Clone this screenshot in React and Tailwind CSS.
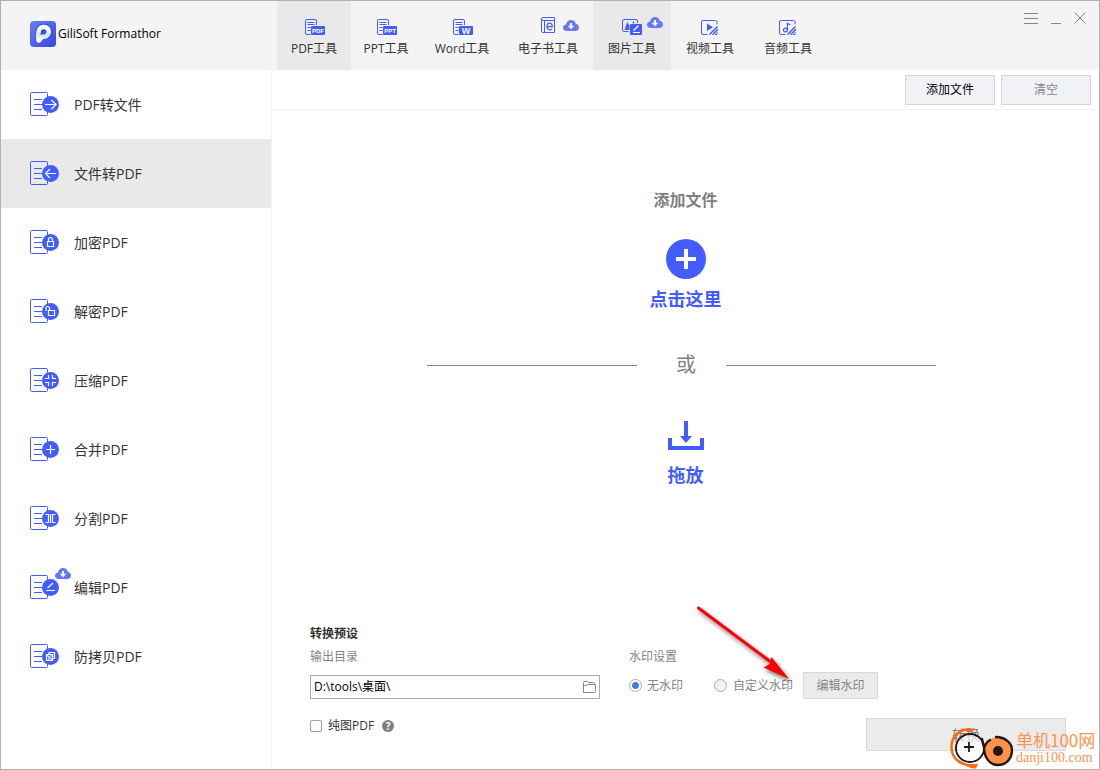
import React, { useState } from 'react';

const BLUE = '#435cff';

const tabs = [
  { id: 'pdf', label: 'PDF工具', width: 'w-[74px]', badge: 'PDF', active: true },
  { id: 'ppt', label: 'PPT工具', width: 'w-[70px]', badge: 'PPT' },
  { id: 'word', label: 'Word工具', width: 'w-[82px]', badge: 'W' },
  { id: 'ebook', label: '电子书工具', width: 'w-[90px]', cloud: 'left-[60px] top-[19px]' },
  { id: 'image', label: '图片工具', width: 'w-[78px]', cloud: 'left-[54px] top-[16px]', active: true },
  { id: 'video', label: '视频工具', width: 'w-[78px]' },
  { id: 'audio', label: '音频工具', width: 'w-[78px]' },
];

const menu = [
  { id: 'fromPdf', label: 'PDF转文件' },
  { id: 'toPdf', label: '文件转PDF' },
  { id: 'lock', label: '加密PDF' },
  { id: 'unlock', label: '解密PDF' },
  { id: 'compress', label: '压缩PDF' },
  { id: 'merge', label: '合并PDF' },
  { id: 'split', label: '分割PDF' },
  { id: 'edit', label: '编辑PDF', cloud: true },
  { id: 'protect', label: '防拷贝PDF' },
];

function Logo() {
  return (
    <svg width="26" height="26" viewBox="0 0 26 26" className="shrink-0" aria-hidden="true">
      <defs>
        <linearGradient id="logoBg" x1="0" y1="0" x2="1" y2="1">
          <stop offset="0" stopColor="#6b7df8" />
          <stop offset="1" stopColor="#3448dc" />
        </linearGradient>
        <linearGradient id="logoStem" x1="0" y1="0" x2="0" y2="1">
          <stop offset="0" stopColor="#ffffff" />
          <stop offset="0.65" stopColor="#d3e4f8" />
          <stop offset="1" stopColor="#ffffff" />
        </linearGradient>
      </defs>
      <rect width="26" height="26" rx="4" fill="url(#logoBg)" />
      <path d="M8.4 19.5C7.4 14 8 6 13.5 5.7C21 5.5 20.6 16.2 13.6 15.8" fill="none" stroke="#2c3fc4" strokeOpacity=".5" strokeWidth="6.6" strokeLinecap="round" />
      <path d="M8.4 19.4C7.4 13 8.4 6.2 13.5 6C20.6 5.8 20.4 15.7 13.6 15.6C11.5 15.5 10.4 17 9.2 19.4" fill="none" stroke="url(#logoStem)" strokeWidth="4.6" strokeLinecap="round" strokeLinejoin="round" />
      <circle cx="13.4" cy="11" r="2.5" fill="#3a50e2" />
    </svg>
  );
}

function Cloud() {
  return (
    <svg width="16" height="11" viewBox="0 0 16 11" className="block" aria-hidden="true">
      <path d="M4 11C1.7 11 0 9.7 0 7.7C0 5.8 1.4 4.6 3.1 4.4C3.4 1.8 5.5 0 8 0C10.4 0 12.4 1.6 12.9 4C14.7 4.2 16 5.6 16 7.5C16 9.6 14.4 11 12.2 11Z" fill="#6578f5" />
      <path d="M8 9.3L4.7 5.8H7V3H9V5.8H11.3Z" fill="#fff" />
    </svg>
  );
}

function TabIcon({ id, badge }) {
  if (badge) {
    return (
      <svg width="24" height="20" viewBox="0 0 24 20" aria-hidden="true">
        <path d="M8.5 18.5H5Q3.5 18.5 3.5 17V5Q3.5 3.5 5 3.5H13Q14.5 3.5 14.5 5V9" fill="none" stroke={BLUE} />
        <path d="M5.5 6.5H12.5M5.5 8.5H12.5M5.5 11.5H8.5M5.5 14.5H8.5" stroke={BLUE} />
        <rect x="9" y="10" width="14" height="9" rx="1" fill={BLUE} />
        <text
          x="16"
          y={badge === 'W' ? 18 : 17}
          textAnchor="middle"
          fill="#fff"
          fontFamily="Liberation Sans, sans-serif"
          fontWeight="700"
          fontSize={badge === 'W' ? 9 : 6}
        >
          {badge}
        </text>
      </svg>
    );
  }
  if (id === 'ebook') {
    return (
      <svg width="24" height="20" viewBox="0 0 24 20" fill="none" stroke={BLUE} aria-hidden="true">
        <path d="M18.5 4.5V1.5H7Q5.5 1.5 5.5 3V15Q5.5 16.5 7 16.5H18.5V4.5H7Q5.5 4.5 5.5 3M8.5 4.5V16.5" />
        <path d="M11 10.6H16.3C16.4 8.6 15.4 7.2 13.7 7.2C12 7.2 11 8.7 11 10.6C11 12.6 12.1 13.8 13.8 13.8C14.8 13.8 15.5 13.4 16 12.8" strokeWidth="1.2" />
      </svg>
    );
  }
  if (id === 'image') {
    return (
      <svg width="24" height="20" viewBox="0 0 24 20" aria-hidden="true">
        <path d="M8.5 15.5H4Q2.5 15.5 2.5 14V5Q2.5 3.5 4 3.5H16Q17.5 3.5 17.5 5V7" fill="none" stroke={BLUE} />
        <path d="M4.5 14L7.2 6L9.5 10V14Z" fill={BLUE} />
        <circle cx="13.5" cy="6.5" r="1" fill={BLUE} />
        <rect x="10" y="8" width="12" height="11" rx="1" fill={BLUE} />
        <path d="M13 16.5H20M13.5 14.5L18.5 9.8" stroke="#fff" strokeWidth="1.2" />
      </svg>
    );
  }
  return (
    <svg width="24" height="20" viewBox="0 0 24 20" aria-hidden="true">
      <path d="M9.5 18.5H5Q3.5 18.5 3.5 17V6Q3.5 4.5 5 4.5H17.5Q19 4.5 19 6V8.5M19 16V18.5H17" fill="none" stroke={BLUE} />
      <path d="M11.5 18.5L19.5 10.5M14.5 18.7L20 13.2" stroke={BLUE} strokeWidth="1.5" />
      {id === 'video' ? (
        <path d="M9 7.5V15L15 11.2Z" fill={BLUE} />
      ) : (
        <g fill="none" stroke={BLUE} strokeWidth="1.2">
          <circle cx="9.4" cy="14" r="1.9" />
          <path d="M11.4 14V7.5Q12.5 8.6 14.5 8.3" />
        </g>
      )}
    </svg>
  );
}

// white glyphs inside the round badge, centred on 20.5,12.5
const glyphs = {
  fromPdf: 'M15 12.5H25.5M21.5 8L26 12.5L21.5 17',
  toPdf: 'M26 12.5H15.5M20 8L15.5 12.5L20 17',
  lock: 'M17.5 11.5H23.5V16.5H17.5ZM18.5 11V10Q18.5 7.5 20.5 7.5Q22.5 7.5 22.5 10V11',
  unlock: 'M18.5 11.5H24.5V16.5H18.5ZM16 12V9.5Q16 7.5 17.7 7.5Q19.5 7.5 19.5 9.5V11',
  compress: 'M18.5 7V10.5H15M22.5 7V10.5H26M18.5 18V14.5H15M22.5 18V14.5H26',
  merge: 'M16 12.5H25M20.5 8V17',
  split: 'M20.5 8V17M15.5 8.5H18.5V16.5H15.5M25.5 8.5H22.5V16.5H25.5',
  edit: 'M16 15.5H25M17.5 13L23 8',
  protect: 'M19 10V8.5H24.5V14.5H23M16.5 10.5H22.5V16.5H16.5ZM16.5 10.5L22.5 16.5M18 14.5L19 15.5M20.5 11.5L21.5 12.5',
};

function MenuIcon({ id }) {
  return (
    <svg width="30" height="25" viewBox="0 0 30 25" fill="none" aria-hidden="true">
      <rect x=".5" y=".5" width="17" height="23" rx="1" stroke={BLUE} />
      <path d="M4 7.5H12M4 12.5H12M4 17.5H12" stroke={BLUE} />
      <circle cx="20.5" cy="12.5" r="8.5" fill={BLUE} />
      <path d={glyphs[id]} stroke="#fff" strokeWidth="1.2" />
    </svg>
  );
}

function Header() {
  return (
    <header className="flex h-[69px] shrink-0 bg-[#f4f4f4]">
      <div className="flex w-[276px] shrink-0 items-center pl-[29px] pb-[3px] gap-0.5">
        <Logo />
        <h1 className="text-xs leading-5 text-black">GiliSoft Formathor</h1>
      </div>
      <nav className="flex">
        {tabs.map((tab) => (
          <button
            key={tab.id}
            type="button"
            className={`relative flex flex-col items-center pt-[15px] gap-1 shrink-0 ${tab.width} ${tab.active ? 'bg-[#e9e9e9]' : ''}`}
          >
            <TabIcon id={tab.id} badge={tab.badge} />
            <span className="text-xs leading-[18px] whitespace-nowrap">{tab.label}</span>
            {tab.cloud && (
              <span className={`absolute ${tab.cloud}`}>
                <Cloud />
              </span>
            )}
          </button>
        ))}
      </nav>
      <div className="ml-auto flex items-start gap-3 pt-[10px] pr-[13px]">
        <button type="button" aria-label="菜单">
          <svg width="14" height="16" viewBox="0 0 14 16" className="block" stroke="#858585">
            <path d="M0 2.5H14M0 7.5H14M0 12.5H14" />
          </svg>
        </button>
        <button type="button" aria-label="最小化">
          <svg width="12" height="16" viewBox="0 0 12 16" className="block" stroke="#858585">
            <path d="M1 12.5H11" />
          </svg>
        </button>
        <button type="button" aria-label="关闭">
          <svg width="12" height="16" viewBox="0 0 12 16" className="block" stroke="#858585">
            <path d="M.5 1.5L11.5 12.5M11.5 1.5L.5 12.5" />
          </svg>
        </button>
      </div>
    </header>
  );
}

function Sidebar({ current, onSelect }) {
  return (
    <aside className="w-[271px] shrink-0 border-r border-[#f4f4f4]">
      {menu.map((item) => (
        <button
          key={item.id}
          type="button"
          onClick={() => onSelect(item.id)}
          className={`relative flex w-full items-center gap-[14px] py-[22px] pl-[29px] text-left ${current === item.id ? 'bg-[#e9e9e9]' : ''}`}
        >
          <MenuIcon id={item.id} />
          <span className="text-sm leading-5">{item.label}</span>
          {item.cloud && (
            <span className="absolute left-[54px] top-[15px]">
              <Cloud />
            </span>
          )}
        </button>
      ))}
    </aside>
  );
}

function DropArea() {
  return (
    <section className="flex flex-1 flex-col items-center pt-[78px]">
      <h2 className="text-base leading-6 font-bold text-[#7f7f7f]">添加文件</h2>
      <button type="button" className="mt-[27px] flex flex-col items-center gap-1.5 text-[#435cff]">
        <svg width="40" height="40" viewBox="0 0 40 40" aria-hidden="true">
          <circle cx="20" cy="20" r="20" fill={BLUE} />
          <path d="M10 20H30M20 10V30" stroke="#fff" strokeWidth="4" />
        </svg>
        <span className="text-lg leading-7 font-bold">点击这里</span>
      </button>
      <div className="mt-[38px] flex items-center pr-2">
        <div className="h-px w-[210px] bg-[#858585]" />
        <span className="ml-[39px] mr-[30px] text-xl leading-7 text-[#7f7f7f]">或</span>
        <div className="h-px w-[210px] bg-[#858585]" />
      </div>
      <svg width="36" height="29" viewBox="0 0 36 29" className="mt-[42px]" aria-hidden="true">
        <path d="M2 17V27H34V17" fill="none" stroke={BLUE} strokeWidth="4" />
        <path d="M16 0H20V15H24L18 22L12 15H16Z" fill={BLUE} />
      </svg>
      <p className="mt-[11px] text-lg leading-7 font-bold text-[#435cff]">拖放</p>
    </section>
  );
}

function Settings() {
  const [folder, setFolder] = useState('D:\\tools\\桌面\\');
  const [mark, setMark] = useState('none');
  const [imageOnly, setImageOnly] = useState(false);

  return (
    <section className="pl-[38px] pr-[33px] pb-[18px] text-xs">
      <h3 className="leading-6 font-bold">转换预设</h3>
      <div className="relative flex gap-[29px]">
        <div className="w-[290px]">
          <label htmlFor="folder" className="block leading-[22px] text-[#858585]">输出目录</label>
          <div className="mt-[7px] flex h-6 items-center border border-[#acacac] pl-[3px] pr-[3px]">
            <input
              id="folder"
              type="text"
              value={folder}
              onChange={(e) => setFolder(e.target.value)}
              className="min-w-0 flex-1 leading-5 text-black outline-none"
            />
            <button type="button" aria-label="浏览">
              <svg width="13" height="12" viewBox="0 0 13 12" className="block" fill="none" stroke="#858585">
                <path d="M.5 11.5V1.5Q.5 .5 1.5 .5H4.5L5.5 1.5H10.5Q11.5 1.5 11.5 2.5V3.5M.5 11.5V5.5Q.5 4.5 1.5 4.5L6 3.5H12.5V10.5Q12.5 11.5 11.5 11.5Z" />
              </svg>
            </button>
          </div>
        </div>
        <fieldset className="min-w-0 text-[#858585]">
          <legend className="leading-[22px]">水印设置</legend>
          <div className="mt-1 flex items-center">
            <label className="flex w-[85px] items-center gap-[5px] leading-5">
              <input
                type="radio"
                name="mark"
                checked={mark === 'none'}
                onChange={() => setMark('none')}
                className="size-[13px] appearance-none rounded-full border border-[#acacac] bg-[#f0f2f5] checked:bg-[radial-gradient(circle,#3d7fdc_0_3px,#fff_4px)]"
              />
              无水印
            </label>
            <label className="flex w-[89px] items-center gap-1.5 leading-5 whitespace-nowrap">
              <input
                type="radio"
                name="mark"
                checked={mark === 'custom'}
                onChange={() => setMark('custom')}
                className="size-[13px] shrink-0 appearance-none rounded-full border border-[#acacac] bg-[#f0f2f5] checked:bg-[radial-gradient(circle,#3d7fdc_0_3px,#fff_4px)]"
              />
              自定义水印
            </label>
            <button type="button" className="h-[27px] w-[75px] border border-[#d9d9d9] bg-[#ebebeb]">
              编辑水印
            </button>
          </div>
        </fieldset>
        <svg
          width="112"
          height="88"
          viewBox="0 0 112 88"
          className="pointer-events-none absolute -top-[45px] left-[380px] drop-shadow-[2px_3px_2px_rgba(0,0,0,0.55)]"
          aria-hidden="true"
        >
          <path d="M8.5 7L79.5 60" stroke="#f00" strokeWidth="3" strokeLinecap="round" />
          <path d="M99 78L73.5 66.5L79.5 63L81.5 56Z" fill="#f00" />
        </svg>
      </div>
      <div className="mt-[19px] flex items-start justify-between">
        <div className="flex items-center gap-2">
          <label className="flex items-center gap-1.5 leading-4">
            <input
              type="checkbox"
              checked={imageOnly}
              onChange={(e) => setImageOnly(e.target.checked)}
              className="size-3 appearance-none rounded-xs border border-[#a0a0a0] bg-[#fafbfc] checked:bg-[#435cff]"
            />
            纯图PDF
          </label>
          <span className="flex size-3 items-center justify-center rounded-full bg-[#808080] text-[10px] leading-3 font-bold text-white">?</span>
        </div>
        <button type="button" className="h-[33px] w-[200px] border border-[#d9d9d9] bg-[#ebebeb] text-sm text-[#7f7f7f]">
          转换
        </button>
      </div>
    </section>
  );
}

function SiteMark() {
  return (
    <div className="pointer-events-none absolute bottom-0 right-0.5 flex items-center text-[#ff9350]">
      <svg width="66" height="42" viewBox="0 0 66 42" fill="none" aria-hidden="true">
        <path d="M22 3C10 0 1 10 1.5 21C2 32 11 39 26 39" stroke="#ff6b0c" strokeWidth="2.5" />
        <path d="M14 3Q20 -1 24 3L20 4.5Z M20 37L28 37L26 41.5Q21 42 17 39Z" fill="#ff6b0c" />
        <circle cx="20" cy="21" r="14" stroke="#231815" strokeWidth="2" />
        <circle cx="20" cy="21" r="13" fill="#fff" fillOpacity=".65" />
        <path d="M14 20H24M19 15V25" stroke="#231815" strokeWidth="1.8" />
        <circle cx="48" cy="24" r="14" fill="#ff914d" />
        <path d="M32 12Q33 17 34 20C34 31 40 38 48 38C56 38 62 32 62 23C62 16 55 10 46 10M40 13Q35 16 34 22" stroke="#231815" strokeWidth="2.4" strokeLinecap="round" />
        <circle cx="48" cy="24" r="5" fill="#231815" />
      </svg>
      <div className="w-[81px]">
        <p className="font-['Noto_Sans_CJK_SC',sans-serif] text-[17px] leading-5 whitespace-nowrap">单机100网</p>
        <p className="font-['Liberation_Serif',serif] text-sm leading-4">danji100.com</p>
      </div>
    </div>
  );
}

export default function App() {
  const [current, setCurrent] = useState('toPdf');

  return (
    <div className="relative flex min-h-screen flex-col border border-[#b0b0b0] bg-white font-['Open_Sans','Noto_Sans_CJK_SC',sans-serif] text-[#333]">
      <Header />
      <div className="flex flex-1">
        <Sidebar current={current} onSelect={setCurrent} />
        <main className="flex min-w-0 flex-1 flex-col">
          <div className="flex h-10 items-center justify-end gap-1.5 border-b border-[#f4f4f4] pr-2 text-xs">
            <button type="button" className="h-[30px] w-[90px] border border-[#d6d6d6] bg-[#f0f2f5] text-black">
              添加文件
            </button>
            <button type="button" className="h-[30px] w-[90px] border border-[#d6d6d6] bg-[#f0f2f5] text-[#858585]">
              清空
            </button>
          </div>
          <DropArea />
          <Settings />
        </main>
      </div>
      <SiteMark />
    </div>
  );
}
